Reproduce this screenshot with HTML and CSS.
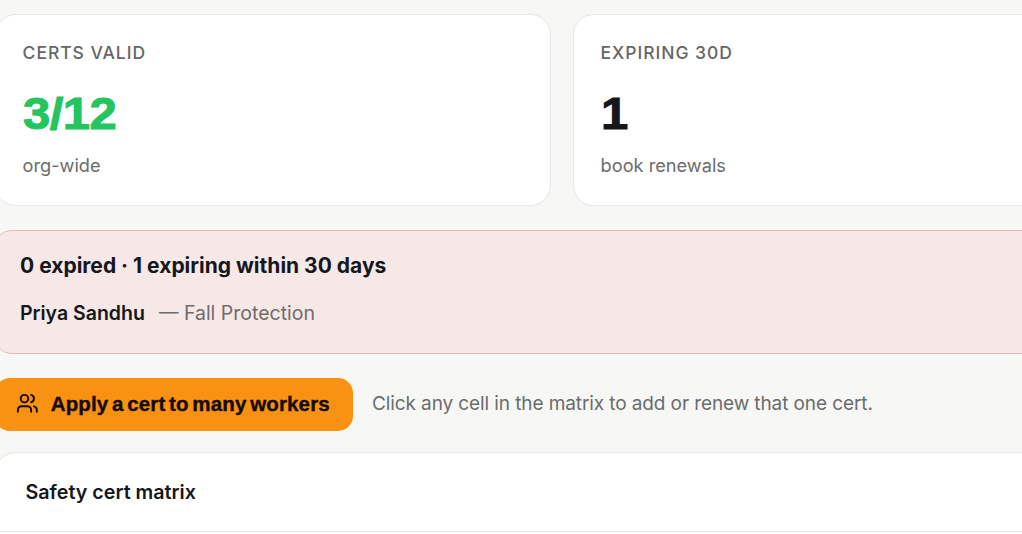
FILE: index.html
```html
<!DOCTYPE html>
<html lang="en">
<head>
    <meta charset="UTF-8">
    <meta name="viewport" content="width=device-width, initial-scale=1.0">
    <title>Safety certs</title>
    <link rel="stylesheet" href="styles.css">
</head>
<body>
    <main class="page">
        <section class="stats">
            <div class="card stat">
                <div class="stat-label">CERTS VALID</div>
                <div class="stat-value good"><span>3/12</span></div>
                <div class="stat-note">org-wide</div>
            </div>
            <div class="card stat">
                <div class="stat-label">EXPIRING 30D</div>
                <div class="stat-value"><span>1</span></div>
                <div class="stat-note">book renewals</div>
            </div>
        </section>

        <section class="alert">
            <h2 class="alert-title">0 expired · 1 expiring within 30 days</h2>
            <p class="alert-row"><strong>Priya Sandhu</strong><span class="alert-cert">— Fall Protection</span></p>
        </section>

        <div class="actions">
            <button type="button" class="apply">
                <svg class="icon" viewBox="0 0 24 24" fill="none" stroke="currentColor" stroke-width="2" stroke-linecap="round" stroke-linejoin="round">
                    <path d="M16 21v-2a4 4 0 0 0-4-4H6a4 4 0 0 0-4 4v2"/>
                    <circle cx="9" cy="7" r="4"/>
                    <path d="M22 21v-2a4 4 0 0 0-3-3.87"/>
                    <path d="M16 3.13a4 4 0 0 1 0 7.75"/>
                </svg>
                <span class="apply-text">Apply a cert to many workers</span>
            </button>
            <span class="hint">Click any cell in the matrix to add or renew that one cert.</span>
        </div>

        <section class="card matrix">
            <h2 class="matrix-title">Safety cert matrix</h2>
        </section>
    </main>
</body>
</html>
```

FILE: styles.css
```css
* {
    box-sizing: border-box;
}

body {
    margin: 0;
    height: 534px;
    overflow: hidden;
    background: #f7f7f5;
    color: #15171b;
    font-family: Inter, sans-serif;
}

h2, p {
    margin: 0;
}

/* The page runs past both sides of the window */
.page {
    width: 1134px;
    margin-left: -5px;
    padding-top: 14px;
}

.card {
    background: #fff;
    border: 1px solid #e9e9e8;
    border-radius: 21px;
    box-shadow: 0 0 1px rgba(0, 0, 0, 0.06);
}

/* Stat cards */
.stats {
    display: grid;
    grid-template-columns: 1fr 1fr;
    gap: 22px;
}

.stat {
    height: 192px;
    padding: 25px 26.6px;
}

.stat-label {
    font-size: 17.5px;
    line-height: 26px;
    font-weight: 500;
    letter-spacing: 0.95px;
    color: #666;
}

.stat-value {
    margin-top: 22px;
    font-family: "Liberation Sans", sans-serif;
    font-size: 45px;
    line-height: 52px;
    font-weight: bold;
    letter-spacing: -0.5px;
    -webkit-text-stroke: 1px currentColor;
}

.stat-value span {
    display: inline-block;
    transform: scaleX(1.09);
    transform-origin: left;
}

.good {
    color: #22c55e;
}

.stat-note {
    margin-top: 12px;
    font-size: 18.2px;
    line-height: 26px;
    color: #6b6b6b;
}

/* Expiry alert */
.alert {
    height: 124px;
    margin-top: 24px;
    padding: 21px 24px;
    background: #f6e8e7;
    border: 1px solid #efb9b9;
    border-radius: 16px;
}

.alert-title {
    font-size: 21px;
    line-height: 28px;
    font-weight: 650;
}

.alert-row {
    margin-top: 19px;
    font-size: 19.5px;
    line-height: 28px;
}

.alert-row strong {
    font-weight: 600;
}

.alert-cert {
    margin-left: 14px;
    color: #716b6b;
}

/* Bulk action */
.actions {
    display: flex;
    align-items: center;
    gap: 19px;
    margin-top: 24px;
}

.apply {
    display: flex;
    align-items: center;
    width: 358px;
    height: 53px;
    padding: 0 0 2px 21px;
    gap: 12px;
    background: #f99212;
    color: #130b02;
    border: none;
    border-radius: 15px;
}

.icon {
    width: 22.7px;
    height: 22.7px;
    flex: none;
}

.apply-text {
    font-family: "Liberation Sans", sans-serif;
    font-size: 20.5px;
    font-weight: bold;
    letter-spacing: 0.15px;
    word-spacing: -2.2px;
    white-space: nowrap;
    -webkit-text-stroke: 0.4px currentColor;
}

.hint {
    padding-bottom: 2px;
    font-size: 19px;
    letter-spacing: -0.1px;
    color: #6b6c6c;
    white-space: nowrap;
}

/* Matrix panel */
.matrix {
    height: 200px;
    margin-top: 21px;
}

.matrix-title {
    height: 79px;
    padding-left: 29.5px;
    border-bottom: 1px solid #e6e6e6;
    font-size: 19.7px;
    line-height: 79px;
    font-weight: 600;
}
```
